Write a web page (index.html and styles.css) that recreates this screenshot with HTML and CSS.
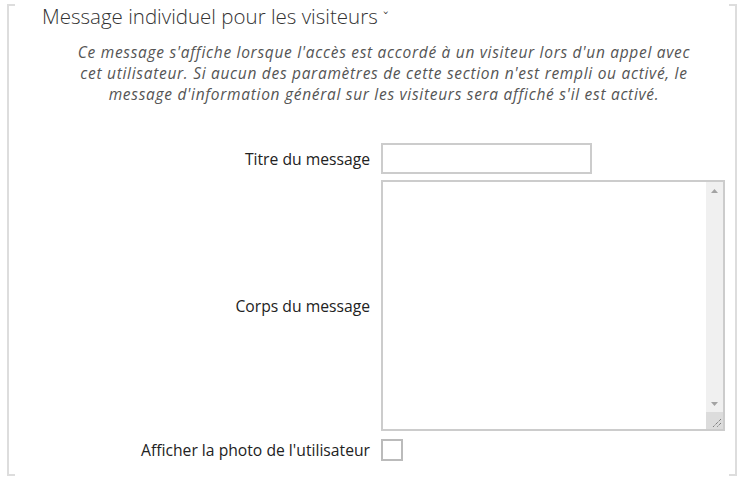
FILE: index.html
```html
<!DOCTYPE html>
<html>
<head>
    <meta charset="utf-8">
    <title>Message individuel pour les visiteurs</title>
    <link rel="stylesheet" href="styles.css">
</head>
<body>
    <div class="section">
        <span class="corner tl"></span>
        <span class="corner tr"></span>
        <span class="corner bl"></span>
        <span class="corner br"></span>

        <h2 class="title">Message individuel pour les visiteurs <span class="chevron">&#x2c7;</span></h2>

        <p class="hint">Ce message s'affiche lorsque l'accès est accordé à un visiteur lors d'un appel avec<br>
            cet utilisateur. Si aucun des paramètres de cette section n'est rempli ou activé, le<br>
            message d'information général sur les visiteurs sera affiché s'il est activé.</p>

        <div class="form">
            <div class="row">
                <label class="label">Titre du message</label>
                <input class="textbox" type="text">
            </div>
            <div class="row">
                <label class="label">Corps du message</label>
                <div class="textarea-box">
                    <textarea class="textarea"></textarea>
                    <div class="scrollbar">
                        <span class="arrow">
                            <svg width="7" height="4" viewBox="0 0 7 4"><path d="M0 4L3.5 0L7 4Z" fill="#a3a3a3"/></svg>
                        </span>
                        <span class="track"></span>
                        <span class="arrow">
                            <svg width="7" height="4" viewBox="0 0 7 4"><path d="M0 0L3.5 4L7 0Z" fill="#a3a3a3"/></svg>
                        </span>
                        <span class="resizer">
                            <svg width="17" height="17" viewBox="0 0 17 17"><path d="M15 7L7 15M15 11L11 15" stroke="#555" stroke-dasharray="1 1"/></svg>
                        </span>
                    </div>
                </div>
            </div>
            <div class="row check-row">
                <label class="label">Afficher la photo de l'utilisateur</label>
                <span class="checkbox"></span>
            </div>
        </div>
    </div>
</body>
</html>
```

FILE: styles.css
```css
html, body {
    font-family: "Open Sans", sans-serif;
    font-size: 14px;
    color: #222;
}
body {
    margin: 0;
    padding: 0;
    background: #fff;
}

.section {
    position: relative;
    margin: 13px 16px 0 7px;
    height: 472px;
    border-left: 2px solid #ddd;
    border-right: 2px solid #ddd;
}
.corner {
    position: absolute;
    width: 6px;
    height: 2px;
    background: #ddd;
}
.corner.tl { top: 0; left: 0; }
.corner.tr { top: 0; right: 0; }
.corner.bl { bottom: 0; left: 0; }
.corner.br { bottom: 0; right: 0; }

.title {
    margin: -9px 0 0 33px;
    font-size: 20.5px;
    font-weight: 300;
    color: #333;
    line-height: 24px;
}
.chevron {
    font-size: 15px;
    margin-left: 0;
    vertical-align: 1px;
}

.hint {
    margin: 13px 0 0 0;
    padding-left: 24px;
    text-align: center;
    font-style: italic;
    color: #555;
    font-size: 15.5px;
    letter-spacing: 0.7px;
    line-height: 21px;
}

.form {
    margin-top: 38px;
    display: flex;
    flex-direction: column;
}
.row {
    display: flex;
    align-items: center;
    gap: 11px;
    margin-bottom: 6px;
}
.label {
    width: 361px;
    text-align: right;
    font-size: 15.7px;
}
.textbox {
    box-sizing: border-box;
    width: 211px;
    height: 31px;
    border: 2px solid #ccc;
    margin: 0;
    padding: 4px 6px;
    outline: none;
}

.textarea-box {
    box-sizing: border-box;
    display: flex;
    width: 344px;
    height: 251px;
    border: 2px solid #ccc;
}
.textarea {
    flex: 1;
    border: none;
    margin: 0;
    padding: 4px 6px;
    resize: none;
    outline: none;
    font-family: "Open Sans", sans-serif;
}
.scrollbar {
    width: 17px;
    display: flex;
    flex-direction: column;
    background: #f0f0f0;
}
.arrow {
    height: 17px;
    display: flex;
    align-items: center;
    justify-content: center;
}
.track {
    flex: 1;
}
.resizer {
    height: 17px;
    background: #dcdcdc;
    display: flex;
}

.check-row {
    margin-top: 2px;
}
.checkbox {
    box-sizing: border-box;
    width: 22px;
    height: 22px;
    border: 2px solid #bbb;
}
```
